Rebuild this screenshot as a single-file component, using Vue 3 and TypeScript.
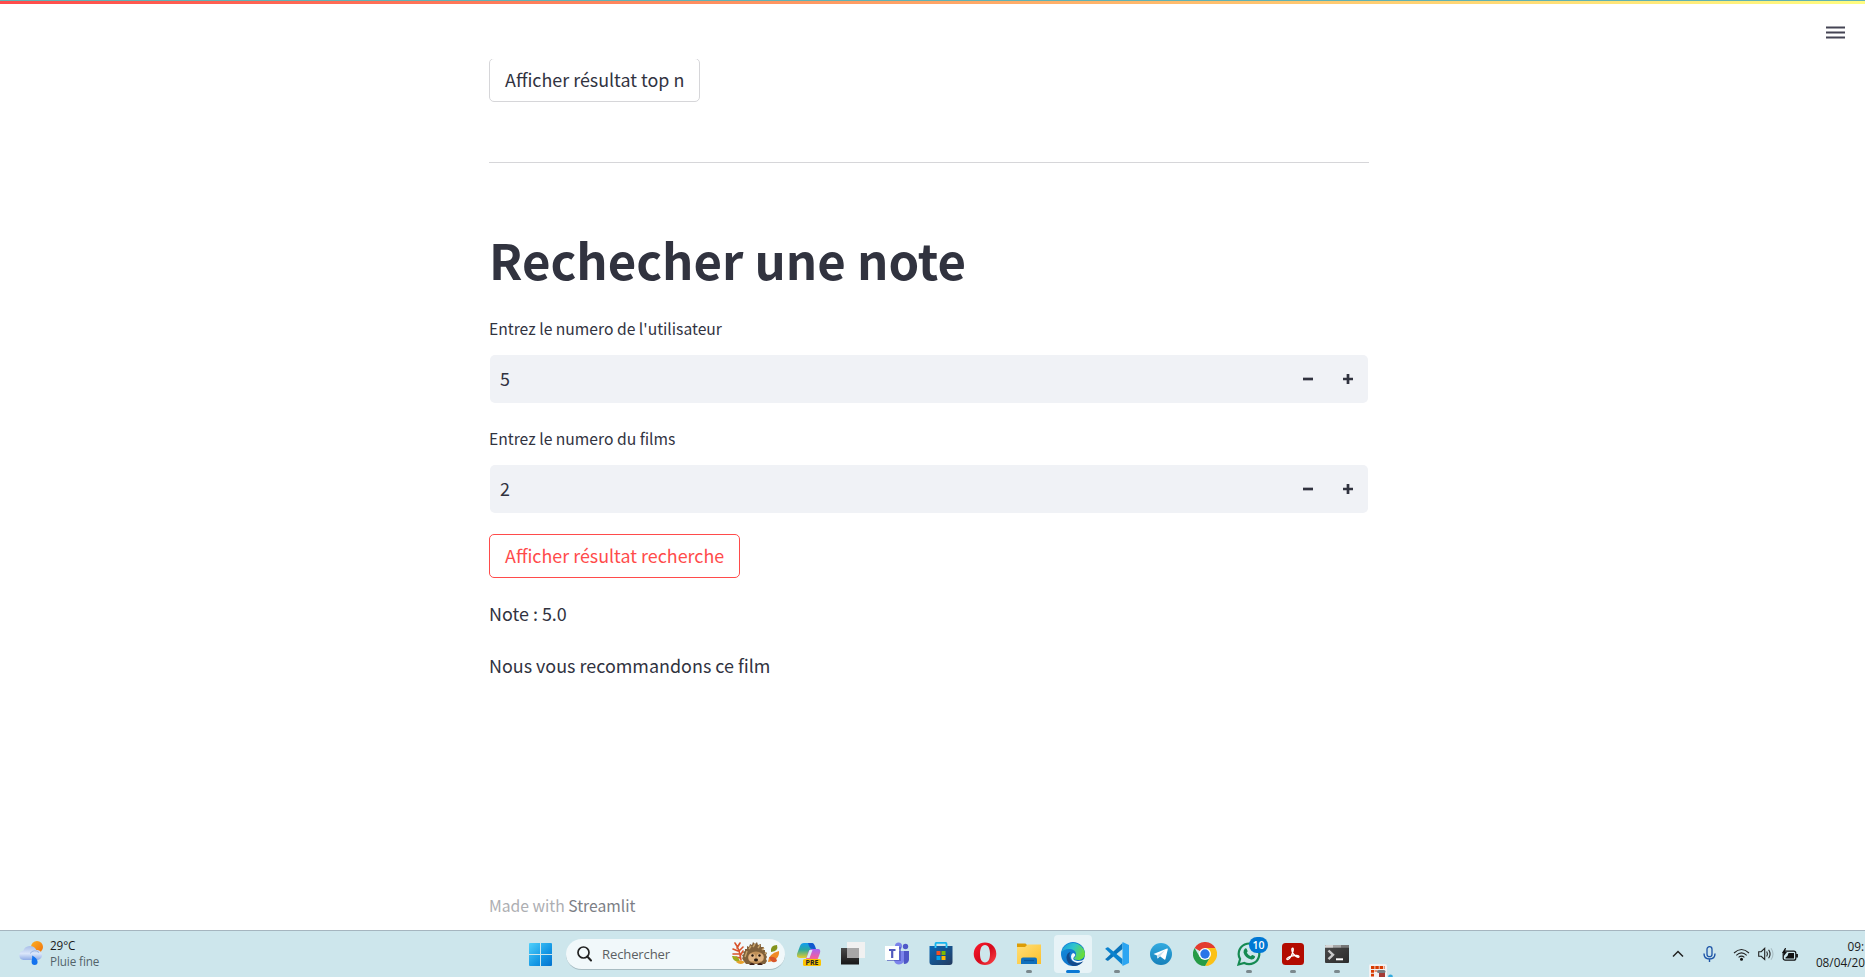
<script setup lang="ts">
import { ref } from 'vue'

interface Field { id: string; label: string; value: number }

const fields = ref<Field[]>([
  { id: 'user', label: "Entrez le numero de l'utilisateur", value: 5 },
  { id: 'film', label: 'Entrez le numero du films', value: 2 },
])

function step(field: Field, delta: number): void {
  field.value += delta
}
</script>

<template>
  <div class="screen">
    <div class="edge-line"></div>
    <div class="decoration"></div>
    <header class="header">
      <svg class="menu" width="19" height="14" viewBox="0 0 19 14">
        <path d="M0 1.5h19M0 6.5h19M0 11.5h19" stroke="#454454" stroke-width="2.200" />
      </svg>
    </header>

    <main class="main">
      <button class="btn first">Afficher résultat top n</button>
      <hr class="divider" />
      <h1 class="title">Rechecher une note</h1>
      <div v-for="f in fields" :key="f.id" class="field">
        <label class="label" :class="f.id">{{ f.label }}</label>
        <div class="input">
          <span class="value">{{ f.value }}</span>
          <button class="step" @click="step(f, -1)">
            <svg width="10" height="10" viewBox="0 0 10 10"><path d="M0 5h10" stroke="#31333f" stroke-width="2.7" /></svg>
          </button>
          <button class="step" @click="step(f, 1)">
            <svg width="10" height="10" viewBox="0 0 10 10"><path d="M0 5h10M5 0v10" stroke="#31333f" stroke-width="2.7" /></svg>
          </button>
        </div>
      </div>
      <button class="btn active">Afficher résultat recherche</button>
      <p class="text note">Note : 5.0</p>
      <p class="text reco">Nous vous recommandons ce film</p>
      <footer class="footer">Made with <a>Streamlit</a></footer>
    </main>

    <nav class="taskbar">
      <div class="weather">
        <svg width="26" height="26" viewBox="0 0 26 26">
          <defs>
            <linearGradient id="sun" x1="0" y1="0" x2="1" y2="1"><stop offset="0" stop-color="#fdb022" /><stop offset="1" stop-color="#f0700c" /></linearGradient>
            <linearGradient id="cloud" x1="0" y1="0" x2="0" y2="1"><stop offset="0" stop-color="#a9bfe8" /><stop offset=".55" stop-color="#dbe6fa" /><stop offset="1" stop-color="#8fabe6" /></linearGradient>
          </defs>
          <circle cx="19" cy="7" r="6" fill="url(#sun)" />
          <path d="M5.500 20a4.700 4.700 0 0 1-.2-9.300A7 7 0 0 1 18.300 10a5 5 0 0 1 1.500 10z" fill="url(#cloud)" />
          <path d="M12 13.500q4-5 9-1" fill="none" stroke="#9db5e3" stroke-width="1" />
          <path d="M14.200 15.500c3.500 1.800 5.400 4 5.400 6.500a3 3 0 0 1-6 0c0-2 .8-3.500.6-6.500z" fill="#1573ee" />
        </svg>
        <div class="weather-text"><span class="temp">29°C</span><span class="cond">Pluie fine</span></div>
      </div>

      <div class="apps">
        <svg class="start" width="23" height="23" viewBox="0 0 23 23">
          <defs><linearGradient id="win" x1="0" y1="0" x2="1" y2="1"><stop offset="0" stop-color="#4fd0fb" /><stop offset=".6" stop-color="#1296e4" /><stop offset="1" stop-color="#0472ce" /></linearGradient></defs>
          <path d="M1 0h10v11H0V1q0-1 1-1zM12 0h10q1 0 1 1v10H12zM0 12h11v11H1q-1 0-1-1zM12 12h11v10q0 1-1 1H12z" fill="url(#win)" />
        </svg>
        <div class="search">
          <svg class="lens" width="15" height="16" viewBox="0 0 15 16"><circle cx="6.500" cy="6.500" r="5.500" fill="none" stroke="#222" stroke-width="1.700" /><path d="M10.300 10.500l3.700 4" stroke="#222" stroke-width="2" stroke-linecap="round" /></svg>
          <span class="placeholder">Rechercher</span>
          <svg class="hedgehog" width="50" height="24" viewBox="0 0 50 24">
            <path d="M10 18Q9 8 4 1M7 9L2 7M8 12L2 12M6 6l3-5M8 9l4-4M9 14l3-5M9 16l-4-1" stroke="#d8532a" stroke-width="1.600" fill="none" stroke-linecap="round" />
            <path d="M1 14q7-1 8 6q-7 0-8-6z" fill="#9eaa1d" />
            <path d="M5 20q5-3 9 0q-4 4-9 0z" fill="#e8a12a" />
            <path d="M40 10q-1-7 6-7q2 6-6 7z" fill="#83931b" />
            <path d="M37 20q0-8 11-11q1 9-11 11z" fill="#f08a25" />
            <path d="M38 15q7-1 8 4q-5 4-8-4z" fill="#d8562a" />
            <path d="M12 18l-1-2 1-1-1-2 2-1-1-2 2-1 0-2 2 0 0-3 2 1 1-3 2 1 1-3 2 2 2-2 1 3 3-1 0 3 3 0-1 3 2 0 0 2 2 1-1 2 1 2-1 2 1 2-2 3H15z" fill="#80603a" />
            <path d="M14 15l2-6M18 7l2-3M22 5l2-3M27 6l2-3M31 8l2-2M34 12l1-2" stroke="#c7a36a" stroke-width="1.400" />
            <ellipse cx="25" cy="15.500" rx="8" ry="6" fill="#c09058" />
            <ellipse cx="21" cy="15.500" rx="3.500" ry="4" fill="#dfb484" /><ellipse cx="29" cy="15.500" rx="3.500" ry="4" fill="#dfb484" />
            <circle cx="21.500" cy="13.500" r="1.200" fill="#24170f" /><circle cx="28.500" cy="13.500" r="1.200" fill="#24170f" />
            <ellipse cx="25" cy="18" rx="2" ry="1.400" fill="#24170f" />
            <path d="M18 23q3-4 6 0zM26 23q3-4 6 0z" fill="#3b1e18" />
          </svg>
        </div>

        <div class="app">
          <svg width="24" height="24" viewBox="0 0 24 24">
            <defs>
              <linearGradient id="cpA" x1="0" y1="0" x2="0" y2="1"><stop offset="0" stop-color="#129df0" /><stop offset=".45" stop-color="#2ba8a0" /><stop offset="1" stop-color="#e8cd2a" /></linearGradient>
              <linearGradient id="cpB" x1="0" y1="0" x2="0" y2="1"><stop offset="0" stop-color="#a765f2" /><stop offset=".5" stop-color="#ee5fa4" /><stop offset="1" stop-color="#f98c55" /></linearGradient>
            </defs>
            <path d="M7 1h8q2 0 1 3l-3 9q-1 3-4 3H3q-4 0-3-4l3-8q1-3 4-3z" fill="url(#cpA)" />
            <path d="M11 1h4q2 0 3 3l1 3h-3q-3 0-4-3z" fill="#1259ce" />
            <path d="M15 7h6q3 0 2 4l-3 8q-1 4-5 4H9q-2 0-1-3l3-9q1-4 4-4z" fill="url(#cpB)" />
            <path d="M12.500 8h3l-3 8h-3z" fill="#dcebf3" />
            <rect x="6" y="17" width="18" height="7" rx="1.500" fill="#fcc400" />
            <text x="15" y="23" text-anchor="middle" class="pre">PRE</text>
          </svg>
        </div>
        <div class="app">
          <svg width="24" height="24" viewBox="0 0 24 24">
            <defs><linearGradient id="tv" x1="0" y1="0" x2="0" y2="1"><stop offset="0" stop-color="#494949" /><stop offset="1" stop-color="#171717" /></linearGradient></defs>
            <rect x="0" y="6" width="18" height="16.500" fill="url(#tv)" /><rect x="6" y="0" width="18" height="16" fill="#f1f1f1" /><path d="M6 6h12v10H6z" fill="#a7a7a7" />
          </svg>
        </div>
        <div class="app">
          <svg width="24" height="24" viewBox="0 0 24 24">
            <circle cx="20.500" cy="4.500" r="2.700" fill="#5059c9" /><path d="M16 9h8v9q-1 4-5 4z" fill="#4e56c6" />
            <circle cx="13.500" cy="4" r="3.500" fill="#7b83eb" /><path d="M9 9h10v8q0 5-5 5.500q-4 0-5-4z" fill="#7b83eb" />
            <rect x="2" y="5" width="14" height="14" fill="#4b53bc" opacity=".65" />
            <rect x="0" y="4" width="14" height="14" fill="#fff" /><path d="M4 8h6.500M7.200 8v8" stroke="#5058bd" stroke-width="2.200" />
          </svg>
        </div>
        <div class="app">
          <svg width="24" height="24" viewBox="0 0 24 24">
            <defs><linearGradient id="st" x1="0" y1="0" x2="1" y2="1"><stop offset="0" stop-color="#0a69b8" /><stop offset="1" stop-color="#243a5e" /></linearGradient></defs>
            <path d="M6.500 6V2q0-1.200 1.200-1.200h8.600q1.200 0 1.200 1.200v4" fill="none" stroke="#18b6ee" stroke-width="1.800" />
            <path d="M.5 4h23v16q0 3-3 3h-17q-3 0-3-3z" fill="url(#st)" />
            <path d="M6.500 4v2M17.500 4v2" stroke="#35cbfa" stroke-width="1.800" />
            <path d="M7.500 9h4v4h-4z" fill="#f25022" /><path d="M12.500 9h4v4h-4z" fill="#7fba00" /><path d="M7.500 14h4v4h-4z" fill="#00a4ef" /><path d="M12.500 14h4v4h-4z" fill="#ffb900" />
          </svg>
        </div>
        <div class="app">
          <svg width="24" height="24" viewBox="0 0 24 24">
            <defs><linearGradient id="op" x1="0" y1="0" x2="1" y2="1"><stop offset="0" stop-color="#ff1b2d" /><stop offset=".5" stop-color="#d6091c" /><stop offset="1" stop-color="#ff4b4b" /></linearGradient></defs>
            <path fill-rule="evenodd" d="M12 .5a11.300 11.300 0 1 1 0 22.600a11.300 11.300 0 1 1 0-22.600zM12 3c-3.500 0-5 4-5 8.800s1.500 8.800 5 8.800s5-4 5-8.800S15.500 3 12 3z" fill="url(#op)" />
          </svg>
        </div>
        <div class="app">
          <svg width="24" height="24" viewBox="0 0 24 24">
            <defs><linearGradient id="fo" x1="0" y1="0" x2="1" y2="1"><stop offset="0" stop-color="#ffdf78" /><stop offset="1" stop-color="#fcc02c" /></linearGradient></defs>
            <path d="M0 1.500h8.500l2 2-2 2H0z" fill="#dd9c05" /><path d="M0 5h8l2.500-2.500H24V22H0z" fill="url(#fo)" />
            <path d="M4 22v-4.500q0-2 2-2h12q2 0 2 2V22z" fill="#0f70bd" /><path d="M7 18.500h10" stroke="#0a569b" stroke-width="1.200" />
          </svg>
          <i class="dot"></i>
        </div>
        <div class="app current">
          <svg width="24" height="24" viewBox="0 0 24 24">
            <defs>
              <linearGradient id="edA" x1="0" y1="0" x2="1" y2=".45"><stop offset="0" stop-color="#1997dd" /><stop offset=".5" stop-color="#2cc4cf" /><stop offset="1" stop-color="#66dc3e" /></linearGradient>
              <linearGradient id="edB" x1="0" y1="0" x2="1" y2="1"><stop offset="0" stop-color="#1690df" /><stop offset="1" stop-color="#0a65c0" /></linearGradient>
            </defs>
            <circle cx="12" cy="12" r="12" fill="url(#edB)" />
            <path d="M.5 10A12 12 0 0 1 24 11.500c0 4-3 6.500-7 6.500-2.500 0-4.500-1-4-2 1.500-1 2-2 2-4 0-3-3-5-7-5C4 7 1.500 8.500.5 10z" fill="url(#edA)" />
            <path d="M8.500 13c0 6 5 8.500 10 7.500q3-.7 4-1.500-4 5.500-10.500 5-7-3-6.500-9c.3-3 2-4.500 4-5q-1 1.500-1 3z" fill="#134a8c" />
            <path d="M12.500 16c-1 2 2 3 5 3q4 0 6-2l-1 2q-3 2-6.500 1.700-6-1.200-6-6.200 0-2.500 2-3.500 3 1 2 3-1.500 1-1.500 2z" fill="#f3f9fb" />
          </svg>
          <i class="dot"></i>
        </div>
        <div class="app">
          <svg width="24" height="24" viewBox="0 0 24 24">
            <path d="M1 16.500L17.500 1v6L3.500 18.500q-1 .7-2-.2l-1-.8q-.6-.6.5-1z" fill="#0a74bb" />
            <path d="M1 7.500L17.500 23v-6L3.500 5.500q-1-.7-2 .2l-1 .8q-.6.600.5 1z" fill="#0a82cf" />
            <path d="M17.500 0L24 3v18l-6.500 3z" fill="#2ba5f2" />
          </svg>
          <i class="dot"></i>
        </div>
        <div class="app">
          <svg width="24" height="24" viewBox="0 0 24 24">
            <defs><linearGradient id="tg" x1="0" y1="0" x2="0" y2="1"><stop offset="0" stop-color="#34abe0" /><stop offset="1" stop-color="#1680ba" /></linearGradient></defs>
            <circle cx="12" cy="12" r="11" fill="url(#tg)" /><path d="M4.500 12L18 6.500q1-.3.800.8L16.500 17q-.3 1-1.200.5L11 14.300l-2 2q-.6.400-.7-.5L8 13.500z" fill="#fff" /><path d="M8 13.500l8-5.200-5 6-2.300 2z" fill="#c5deee" />
          </svg>
        </div>
        <div class="app">
          <svg width="24" height="24" viewBox="0 0 24 24">
            <path d="M12 12L1.600 6A12 12 0 0 1 22.400 6z" fill="#e33b2e" /><path d="M12 12l0-6h10.400A12 12 0 0 1 12 24l5.200-9z" fill="#fbc116" /><path d="M1.600 6A12 12 0 0 0 12 24l5.200-9H6.800z" fill="#259b46" />
            <circle cx="12" cy="12" r="6" fill="#fff" /><circle cx="12" cy="12" r="4.700" fill="#2a75e8" />
          </svg>
        </div>
        <div class="app">
          <svg width="24" height="24" viewBox="0 0 24 24">
            <path d="M1.500 22.500l1.600-5.500A10.300 10.300 0 1 1 7.300 21z" fill="none" stroke="#158a52" stroke-width="2.200" />
            <path d="M8 6.500q1-.7 1.600.2l1 2.200q.2.600-.8 1.800 1.500 2.500 4 3.600 1.200-1.400 1.800-1.200l2 1q.8.600.3 1.500-1.200 2.200-3.600 1.900Q8 16 6.500 10.500 6.400 8 8 6.500z" fill="#158a52" />
          </svg>
          <span class="badge">10</span>
          <i class="dot"></i>
        </div>
        <div class="app">
          <svg width="24" height="24" viewBox="0 0 24 24">
            <rect x="1" y="1" width="22" height="22" rx="3.500" fill="#b30b00" />
            <path d="M6.300 17.500c-1.800-.5 1-2.500 4.300-3.400 3.700-1 7.600-1 7.400.5-.3 1.800-4.500-.5-6.200-3.500-1.300-2.500-1.200-5-.2-5 1.500 0 .3 4.500-1.300 7.700-1.300 2.500-3 4-4 3.700z" fill="none" stroke="#fff" stroke-width="1.300" />
          </svg>
          <i class="dot"></i>
        </div>
        <div class="app">
          <svg width="24" height="24" viewBox="0 0 24 24">
            <defs><linearGradient id="tm" x1="0" y1="0" x2="1" y2="1"><stop offset="0" stop-color="#4a4a4a" /><stop offset="1" stop-color="#2b2b2b" /></linearGradient></defs>
            <rect x="0" y="3" width="24" height="18" rx="1" fill="url(#tm)" /><path d="M1 3h7v2.700H0V4q0-1 1-1z" fill="#d5d5d5" /><path d="M8 3h8v2.700H8z" fill="#a5a5a5" /><path d="M16 3h7q1 0 1 1v1.700h-8z" fill="#777" />
            <path d="M3.500 8.500l4.500 4.300-4.500 4.300" fill="none" stroke="#c9c9c9" stroke-width="2.400" /><path d="M11 17.300h7" stroke="#fff" stroke-width="2" />
          </svg>
          <i class="dot"></i>
        </div>
        <div class="app">
          <svg class="snip" width="25" height="13" viewBox="0 0 25 13">
            <rect x="0" y="0" width="18" height="16" rx="2" fill="#f1f1f2" />
            <path d="M2 3.500h13.500" stroke="#d83b01" stroke-width="3" stroke-dasharray="3.500 .8" /><path d="M3.500 6v7M7 6.500v1" stroke="#d83b01" stroke-width="3" stroke-dasharray="2.800 1" />
            <rect x="10" y="8" width="6" height="6" fill="#a43a35" /><rect x="8" y="6" width="8.500" height="3" rx="1.500" fill="#777e82" /><circle cx="21.500" cy="13" r="2.400" fill="#33aade" />
          </svg>
        </div>
      </div>

      <div class="tray">
        <svg class="chevron" width="12" height="8" viewBox="0 0 12 8"><path d="M1 6.500l5-5 5 5" fill="none" stroke="#222" stroke-width="1.500" /></svg>
        <svg class="mic" width="13" height="16" viewBox="0 0 13 16"><rect x="4" y=".7" width="5" height="10" rx="2.500" fill="none" stroke="#1d55a8" stroke-width="1.300" /><path d="M1 7.500q0 5.500 5.500 5.500T12 7.500M6.500 13v3" fill="none" stroke="#1d55a8" stroke-width="1.400" /></svg>
        <svg class="wifi" width="17" height="13" viewBox="0 0 17 13"><path d="M1 5q7.500-7 15 0M3.300 7.300q5.200-4.800 10.400 0M5.600 9.400q2.900-2.600 5.800 0" fill="none" stroke="#222" stroke-width="1.100" /><circle cx="8.500" cy="11.200" r="1.500" fill="#111" /></svg>
        <svg class="sound" width="16" height="14" viewBox="0 0 16 14"><path d="M.7 4.700h2.500L6.700 1.300v11.200L3.200 9.300H.7z" fill="none" stroke="#222" stroke-width="1.100" /><path d="M8.700 4.500q1.500 2.500 0 5M10.600 2.700q3 4.300 0 8.600" fill="none" stroke="#222" stroke-width="1.100" /><path d="M13 1.200q4 5.800 0 11.600" fill="none" stroke="#a9bec4" stroke-width="1.100" /></svg>
        <svg class="battery" width="17" height="13" viewBox="0 0 17 13"><rect x="1.200" y="3.200" width="12.600" height="9" rx="2" fill="none" stroke="#111" stroke-width="1.200" /><path d="M6.500 5H12v5.500H3.500V9.500q2.500-1 3-4.500z" fill="#111" /><path d="M15 6v3.500" stroke="#111" stroke-width="1.800" /><path d="M3 0L0 5h2l-1 4 4-5H3l1-4z" fill="#111" /></svg>
        <div class="clock"><span class="time">09:</span><span class="date">08/04/20</span></div>
      </div>
    </nav>
  </div>
</template>

<style>
body { margin: 0; overflow: hidden; background: #fff; }
</style>

<style scoped>
.screen { width: 1865px; height: 977px; display: flex; flex-direction: column; overflow: hidden; background: #fff; color: #31333f; font-family: "Noto Sans CJK SC", "Noto Sans", sans-serif; }
.edge-line { height: 1px; background: #61b3b4; flex: none; }
.decoration { height: 3px; background: linear-gradient(90deg, #ff4b4b, #fffd80); flex: none; }
.header { height: 55px; flex: none; display: flex; justify-content: flex-end; }
.menu { margin: 22px 20px 0 0; }
.main { width: 880px; height: 871px; margin-left: 489px; display: flex; flex-direction: column; align-items: flex-start; overflow: hidden; flex: none; }
.btn { box-sizing: border-box; height: 44px; padding: 0 15px 2px; border: 1px solid #d6d6d9; border-radius: 5px; background: #fff; color: #31333f; font: 400 17.9px/40px "Noto Sans CJK SC", sans-serif; white-space: nowrap; flex: none; text-align: left; }
.first { margin-top: -1px; width: 211px; }
.active { margin-top: 21px; width: 251px; border-color: #ff4b4b; color: #ff4b4b; }
.divider { width: 880px; height: 1px; margin: 60px 0 0; border: 0; background: #d6d6d9; flex: none; }
.title { margin: 63px 0 0; font-size: 49.1px; line-height: 66px; font-weight: 700; white-space: nowrap; }
.field { width: 880px; display: flex; flex-direction: column; margin-top: 24px; }
.title + .field { margin-top: 25px; }
.label { font-size: 15.66px; line-height: 24px; margin-bottom: 14px; white-space: nowrap; }
.input { height: 48px; margin: 0 1px; border-radius: 5px; background: #f0f2f6; display: flex; align-items: center; }
.value { flex: 1; padding: 0 0 2px 10px; font-size: 17.9px; line-height: 46px; }
.step { width: 40px; height: 48px; padding: 0; border: 0; background: none; display: flex; align-items: center; justify-content: center; }
.text { margin: 0; font-size: 17.93px; line-height: 32px; white-space: nowrap; }
.note { margin-top: 19px; }
.reco { margin-top: 20px; }
.footer { margin-top: 213px; font-size: 15.68px; line-height: 24px; color: #adaeb2; white-space: nowrap; }
.footer a { color: #7c7e86; }

.taskbar { position: relative; box-sizing: border-box; height: 47px; border-top: 1px solid #a5b5bf; background: #cde6ec; display: flex; flex: none; font-family: "Open Sans", "Noto Sans", sans-serif; color: #1b1b1b; }
.weather { width: 529px; display: flex; flex: none; }
.weather svg { margin: 9px 6px 0 18px; }
.weather-text { display: flex; flex-direction: column; margin-top: 6px; font-size: 11.7px; line-height: 16px; letter-spacing: -0.1px; }
.cond { color: #53636a; }
.apps { display: flex; align-items: center; flex: none; width: 874px; }
.start { margin-right: 14px; flex: none; }
.search { box-sizing: border-box; width: 219px; height: 31px; margin-right: 2px; padding-left: 11px; border-radius: 16px; background: #f1f8fa; border-bottom: 1px solid #a8bcc2; display: flex; align-items: center; flex: none; }
.placeholder { margin-left: 10px; font-size: 13.1px; line-height: 28px; letter-spacing: -0.15px; color: #5b5f62; width: 129px; }
.app { position: relative; width: 44px; height: 46px; display: flex; align-items: center; justify-content: center; flex: none; }
.app > svg { position: relative; z-index: 1; }
.current::before { content: ""; position: absolute; left: 3px; top: 4px; width: 38px; height: 38px; border-radius: 4px; background: #e7f3f7; }
.dot { position: absolute; left: 19px; top: 39px; width: 6px; height: 3px; border-radius: 2px; background: #7b888d; }
.current .dot { left: 15px; width: 14px; background: #0a78d4; }
.badge { position: absolute; left: 22px; top: 6px; width: 19px; height: 16px; border-radius: 8px; background: #0078d4; color: #fff; font-size: 10.5px; font-weight: 600; line-height: 16px; text-align: center; z-index: 2; }
.pre { font: 700 7px "Open Sans", sans-serif; fill: #222; }
.app > .snip { position: absolute; left: 10px; top: 33px; }
.tray { position: absolute; left: 1672px; top: 0; width: 193px; height: 46px; display: flex; align-items: center; }
.tray svg { flex: none; }
.mic { margin-left: 19px; }
.wifi { margin-left: 17px; }
.sound { margin-left: 8px; }
.battery { margin-left: 8px; }
.clock { margin-left: auto; display: flex; flex-direction: column; align-items: flex-end; font-size: 11.8px; line-height: 16px; flex: none; }
.time { margin-right: 1px; }
</style>
